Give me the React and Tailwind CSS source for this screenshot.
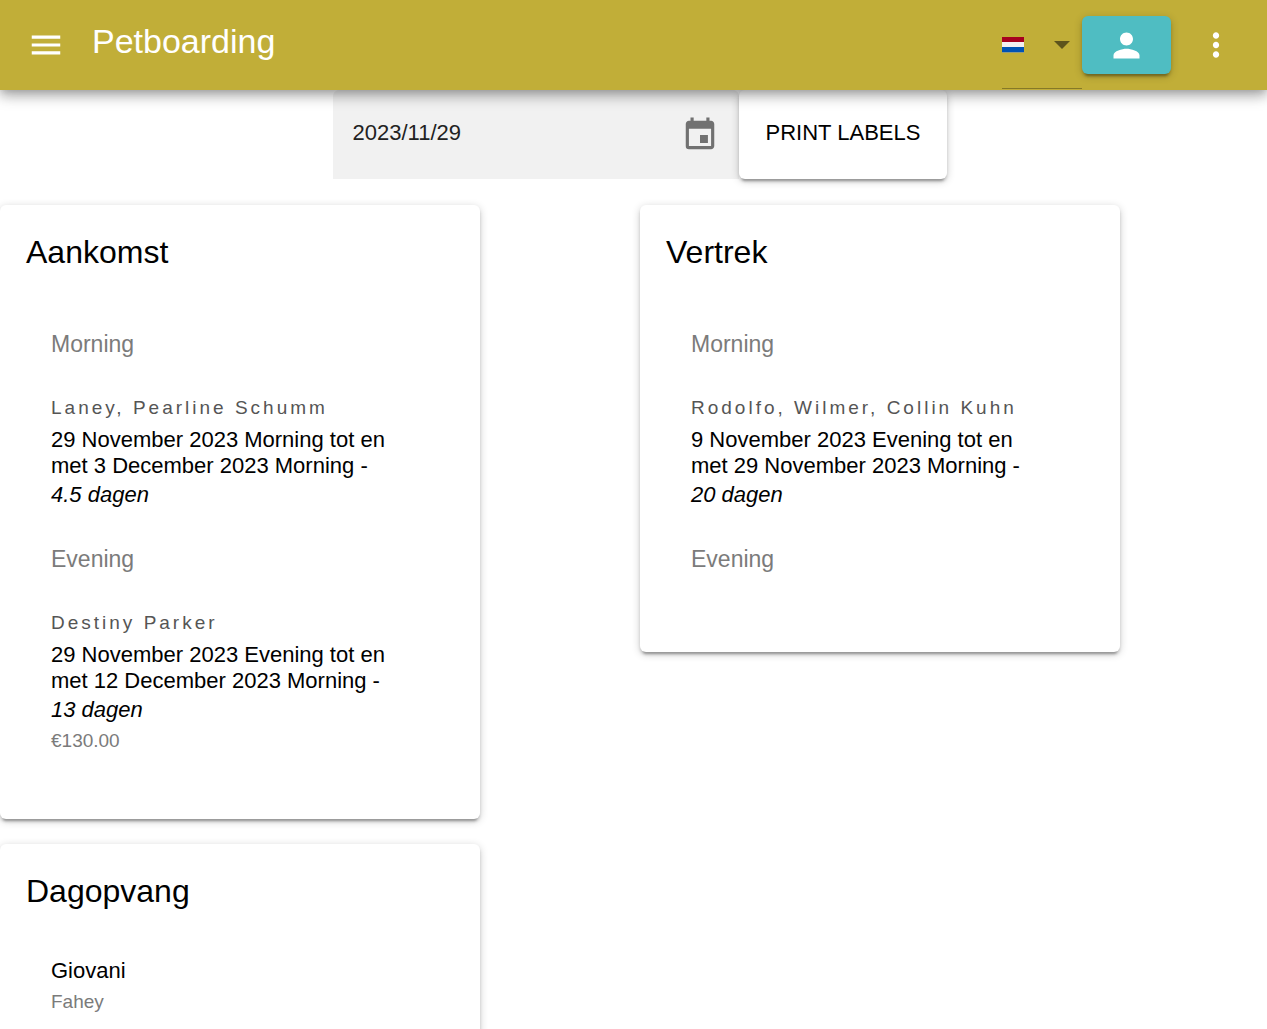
import { MdMenu, MdPerson, MdMoreVert, MdEvent } from 'react-icons/md';

const cardShadow =
  'shadow-[0_5px_2px_-3px_rgba(0,0,0,0.2),0_3px_3px_0_rgba(0,0,0,0.14),0_2px_8px_0_rgba(0,0,0,0.2)]';

const arrivals = [
  {
    title: 'Morning',
    bookings: [
      {
        name: 'Laney, Pearline Schumm',
        period: '29 November 2023 Morning tot en met 3 December 2023 Morning -',
        days: '4.5 dagen',
      },
    ],
  },
  {
    title: 'Evening',
    bookings: [
      {
        name: 'Destiny Parker',
        period: '29 November 2023 Evening tot en met 12 December 2023 Morning -',
        days: '13 dagen',
        price: '€130.00',
      },
    ],
  },
];

const departures = [
  {
    title: 'Morning',
    bookings: [
      {
        name: 'Rodolfo, Wilmer, Collin Kuhn',
        period: '9 November 2023 Evening tot en met 29 November 2023 Morning -',
        days: '20 dagen',
      },
    ],
  },
  { title: 'Evening', bookings: [] },
];

function LanguageSelect() {
  return (
    <div className="relative flex h-[88px] w-20 items-center justify-between border-b border-black/30 pr-3">
      <svg width="22" height="16" viewBox="0 0 22 16" aria-hidden="true">
        <rect width="22" height="16" fill="#f2eff0" />
        <rect width="22" height="5" fill="#a6001f" />
        <rect y="10" width="22" height="5" fill="#0052b4" />
        <rect y="15" width="22" height="1" fill="#8f9c86" />
      </svg>
      <svg width="16" height="8" viewBox="0 0 16 8" aria-hidden="true">
        <path d="M0 0h16L8 8z" fill="#5d541c" />
      </svg>
      <select aria-label="Taal" className="absolute inset-0 cursor-pointer opacity-0">
        <option>Nederlands</option>
      </select>
    </div>
  );
}

function Header() {
  return (
    <header className="relative z-10 flex h-[90px] items-center bg-[#c1ae38] pr-8 text-white shadow-[0_3px_6px_-2px_rgba(0,0,0,0.1),0_6px_10px_0_rgba(0,0,0,0.16),0_4px_16px_0_rgba(0,0,0,0.24)]">
      <button type="button" aria-label="Menu" className="ml-[27px]">
        <MdMenu size={38} />
      </button>
      <h1 className="ml-[27px] pb-2 text-[34px] leading-10">Petboarding</h1>
      <div className="ml-auto flex items-center">
        <LanguageSelect />
        <button
          type="button"
          aria-label="Account"
          className={`flex h-[58px] w-[89px] items-center justify-center rounded-md bg-[#4fbdc2] ${cardShadow}`}
        >
          <MdPerson size={39} />
        </button>
        <button type="button" aria-label="Meer" className="ml-[26px]">
          <MdMoreVert size={38} />
        </button>
      </div>
    </header>
  );
}

function Toolbar() {
  return (
    <div className="flex h-[89px] justify-center pl-[13px]">
      <label className="flex w-[406px] items-center rounded-t-md bg-[#f1f1f1] px-5">
        <input
          type="text"
          aria-label="Datum"
          defaultValue="2023/11/29"
          className="min-w-0 flex-1 bg-transparent pb-1 text-[22px] text-[#222] outline-none"
        />
        <MdEvent size={38} className="text-[#717171]" />
      </label>
      <button
        type="button"
        className={`rounded-md bg-white px-[27px] pb-1 text-[22px] text-black ${cardShadow}`}
      >
        PRINT LABELS
      </button>
    </div>
  );
}

function Card({ title, children }) {
  return (
    <section className={`w-full max-w-[480px] rounded-md bg-white pt-[26px] ${cardShadow}`}>
      <h2 className="px-[26px] text-[32px] leading-[42px]">{title}</h2>
      {children}
    </section>
  );
}

function Booking({ name, period, days, price }) {
  return (
    <li className="pt-[37px]">
      <p className="text-[19px] leading-[26px] tracking-[3px] whitespace-nowrap text-[#555]">{name}</p>
      <p className="pt-1.5 text-[22px] leading-[26px]">{period}</p>
      <p className="pt-0.5 text-[22px] leading-7 italic">{days}</p>
      {price && <p className="pt-1 text-[19px] leading-[26px] text-[#7b7b7b]">{price}</p>}
    </li>
  );
}

function BookingCard({ title, parts }) {
  return (
    <Card title={title}>
      <div className="flex flex-col gap-9 pt-[57px] pr-20 pb-[65px] pl-[51px]">
        {parts.map((part) => (
          <div key={part.title}>
            <h3 className="text-[23px] leading-7 text-[#7b7b7b]">{part.title}</h3>
            <ul className={part.bookings.length ? '' : 'pt-3.5'}>
              {part.bookings.map((booking) => (
                <Booking key={booking.name} {...booking} />
              ))}
            </ul>
          </div>
        ))}
      </div>
    </Card>
  );
}

export default function App() {
  return (
    <div className="min-h-screen bg-white font-['Liberation_Sans',Arial,sans-serif] text-black">
      <Header />
      <Toolbar />
      <main className="grid grid-cols-2 items-start gap-[13px] pt-[26px]">
        <div className="flex flex-col gap-[25px]">
          <BookingCard title="Aankomst" parts={arrivals} />
          <Card title="Dagopvang">
            <ul className="pt-[46px] pb-[66px] pl-[51px]">
              <li>
                <p className="text-[22px] leading-[26px]">Giovani</p>
                <p className="pt-[5px] text-[19px] leading-[26px] text-[#7b7b7b]">Fahey</p>
              </li>
            </ul>
          </Card>
        </div>
        <BookingCard title="Vertrek" parts={departures} />
      </main>
    </div>
  );
}
